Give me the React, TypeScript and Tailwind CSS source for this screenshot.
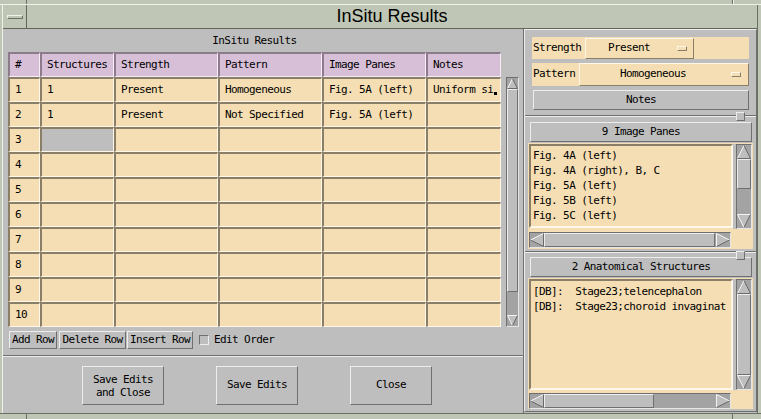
import React from 'react';

const raisedGray = 'bg-[#bebebe] border border-t-[#ededed] border-l-[#ededed] border-r-[#6f6f6f] border-b-[#6f6f6f]';
const raisedBeige = 'bg-[#f5deb3] border border-t-[#fff8e8] border-l-[#fff8e8] border-r-[#8b7e66] border-b-[#8b7e66]';
const sunkenBeige = 'bg-[#f5deb3] border-2 border-t-[#8b7e66] border-l-[#8b7e66] border-r-[#fff8e8] border-b-[#fff8e8]';
const trough = 'bg-[#a3a3a3] border border-t-[#6f6f6f] border-l-[#6f6f6f] border-r-[#e6e6e6] border-b-[#e6e6e6]';

const cellCls = 'h-[25px] flex items-center pl-[5px] overflow-hidden whitespace-nowrap border-l-2 border-t-2 border-r border-b';
const bodyCell = `${cellCls} bg-[#f5deb3] border-l-[#8b7e66] border-t-[#8b7e66] border-r-[#fff8e8] border-b-[#fff8e8]`;
const grayCell = `${cellCls} bg-[#bebebe] border-l-[#8b7e66] border-t-[#8b7e66] border-r-[#fff8e8] border-b-[#fff8e8]`;
const headCell = `${cellCls} bg-[#d8bfd8] border-l-[#8b7b8b] border-t-[#8b7b8b] border-r-[#f6ecf6] border-b-[#f6ecf6]`;

type Dir = 'up' | 'down' | 'left' | 'right';

function Arrow({ dir, w, h }: { dir: Dir; w: number; h: number }) {
  const L = '#f4f4f4';
  const D = '#6a6a6a';
  const cx = w / 2;
  const cy = h / 2;
  const a = 0.5;
  let pts = '';
  let lines: [number, number, number, number, string][] = [];
  if (dir === 'up') {
    pts = `${cx},${a} ${w - a},${h - a} ${a},${h - a}`;
    lines = [[a, h - a, cx, a, L], [cx, a, w - a, h - a, D], [w - a, h - a, a, h - a, D]];
  } else if (dir === 'down') {
    pts = `${a},${a} ${w - a},${a} ${cx},${h - a}`;
    lines = [[a, a, w - a, a, L], [a, a, cx, h - a, L], [w - a, a, cx, h - a, D]];
  } else if (dir === 'left') {
    pts = `${a},${cy} ${w - a},${a} ${w - a},${h - a}`;
    lines = [[a, cy, w - a, a, L], [w - a, a, w - a, h - a, D], [w - a, h - a, a, cy, D]];
  } else {
    pts = `${a},${a} ${w - a},${cy} ${a},${h - a}`;
    lines = [[a, a, a, h - a, L], [a, a, w - a, cy, L], [w - a, cy, a, h - a, D]];
  }
  return (
    <svg width={w} height={h} viewBox={`0 0 ${w} ${h}`} className="block shrink-0">
      <polygon points={pts} fill="#bebebe" />
      {lines.map(([x1, y1, x2, y2, c], i) => (
        <line key={i} x1={x1} y1={y1} x2={x2} y2={y2} stroke={c} strokeWidth={1} />
      ))}
    </svg>
  );
}

function VScroll({ cls, thumb, a }: { cls: string; thumb: string; a: number }) {
  return (
    <div className={`flex flex-col shrink-0 ${trough} ${cls}`}>
      <Arrow dir="up" w={a} h={a} />
      <div className={`shrink-0 ${raisedGray} ${thumb}`} />
      <div className="flex-1" />
      <Arrow dir="down" w={a} h={a} />
    </div>
  );
}

function HScroll({ cls, thumb, a }: { cls: string; thumb: string; a: number }) {
  return (
    <div className={`flex shrink-0 ${trough} ${cls}`}>
      <Arrow dir="left" w={a} h={a} />
      <div className={`shrink-0 ${raisedGray} ${thumb}`} />
      <div className="flex-1" />
      <Arrow dir="right" w={a} h={a} />
    </div>
  );
}

function Dropdown({ cls, text, gap }: { cls: string; text: string; gap: string }) {
  return (
    <div className={`flex items-center ${raisedBeige} ${cls}`}>
      <span className="flex-1 text-center">{text}</span>
      <span className={`w-[10px] h-[5px] ml-[5px] ${gap} ${raisedBeige}`} />
    </div>
  );
}

function Sash({ h, top }: { h: string; top: string }) {
  return (
    <div className={`relative shrink-0 ${h}`}>
      <div className={`absolute left-0 right-0 border-t border-b border-t-[#6f6f6f] border-b-[#ededed] h-[2px] ${top}`} />
      <div className={`absolute left-[211px] top-[2px] w-[9px] h-[9px] ${raisedGray}`} />
    </div>
  );
}

const rows: string[][] = [
  ['1', '1', 'Present', 'Homogeneous', 'Fig. 5A (left)', 'Uniform si'],
  ['2', '1', 'Present', 'Not Specified', 'Fig. 5A (left)', ''],
  ['3', '', '', '', '', ''],
  ['4', '', '', '', '', ''],
  ['5', '', '', '', '', ''],
  ['6', '', '', '', '', ''],
  ['7', '', '', '', '', ''],
  ['8', '', '', '', '', ''],
  ['9', '', '', '', '', ''],
  ['10', '', '', '', '', ''],
];

const headers = ['#', 'Structures', 'Strength', 'Pattern', 'Image Panes', 'Notes'];

const panes = ['Fig. 4A (left)', 'Fig. 4A (right), B, C', 'Fig. 5A (left)', 'Fig. 5B (left)', 'Fig. 5C (left)'];
const structures = ['[DB]:  Stage23;telencephalon', '[DB]:  Stage23;choroid invaginat'];

export default function App() {
  return (
    <div className="w-[761px] h-[419px] overflow-hidden bg-[#bfc6b5] flex flex-col text-black font-['DejaVu_Sans_Mono',monospace] text-[11px] tracking-[-0.6px]">
      {/* resize strip */}
      <div className="h-[5px] flex shrink-0 border-b border-b-[#eef2e8]">
        <div className="w-[27px] border-r border-r-[#6a7163]" />
        <div className="w-[706px] border-r border-r-[#6a7163]" />
        <div className="flex-1 border-l border-l-[#eef2e8]" />
      </div>

      <div className="flex flex-1">
        <div className="w-[3px] border-r border-r-[#eef2e8]" />
        <div className="w-[754px] flex flex-col">
          {/* title bar */}
          <div className="h-[24px] flex shrink-0 border-b border-b-[#5f665a]">
            <div className="w-[24px] flex items-center justify-center border-r border-r-[#5f665a]">
              <div className="w-[16px] h-[4px] border border-t-[#f0f4ea] border-l-[#f0f4ea] border-r-[#6a7163] border-b-[#6a7163]" />
            </div>
            <div className="flex-1 flex items-center justify-center font-['Liberation_Sans',sans-serif] text-[18px] tracking-normal pb-[1px]">
              InSitu Results
            </div>
          </div>

          {/* body */}
          <div className="h-[384px] flex bg-[#bebebe] shrink-0">
            {/* left panel */}
            <div className="w-[521px] flex flex-col border-r border-r-[#6f6f6f]">
              <div className="h-[327px] flex flex-col pl-[5px] border-b border-b-[#6f6f6f]">
                <div className="h-[23px] w-[493px] flex items-center justify-center pt-[2px]">InSitu Results</div>
                <div className="flex">
                  <div className="grid grid-cols-[32px_74px_104px_104px_104px_75px] w-[493px]">
                    {headers.map(h => (
                      <div key={h} className={headCell}>{h}</div>
                    ))}
                    {rows.map((r, ri) =>
                      r.map((v, ci) => (
                        <div key={`${ri}-${ci}`} className={ri === 2 && ci === 1 ? grayCell : bodyCell}>
                          {v}
                          {ri === 0 && ci === 5 && (
                            <span className="inline-block w-[3px] h-[3px] bg-black ml-[1px] mt-[6px]" />
                          )}
                        </div>
                      ))
                    )}
                  </div>
                  <VScroll cls="ml-[5px] mt-[25px] w-[13px] h-[250px]" thumb="h-[203px]" a={11} />
                </div>
                <div className="flex items-center mt-[4px] ml-[1px] h-[18px]">
                  <div className={`w-[48px] h-[18px] flex items-center justify-center ${raisedGray}`}>Add Row</div>
                  <div className={`w-[67px] h-[18px] ml-[2px] flex items-center justify-center ${raisedGray}`}>Delete Row</div>
                  <div className={`w-[66px] h-[18px] ml-[1px] flex items-center justify-center ${raisedGray}`}>Insert Row</div>
                  <div className="w-[10px] h-[10px] ml-[6px] border border-t-[#6f6f6f] border-l-[#6f6f6f] border-r-[#ededed] border-b-[#ededed]" />
                  <span className="ml-[5px]">Edit Order</span>
                </div>
              </div>
              <div className="flex-1 border-t border-t-[#ededed] pt-[9px] pl-[79px] flex gap-[52px]">
                <div className={`w-[82px] h-[39px] flex flex-col items-center justify-center leading-[13px] ${raisedGray}`}>
                  <span>Save Edits</span>
                  <span>and Close</span>
                </div>
                <div className={`w-[82px] h-[39px] flex items-center justify-center ${raisedGray}`}>Save Edits</div>
                <div className={`w-[82px] h-[39px] flex items-center justify-center ${raisedGray}`}>Close</div>
              </div>
            </div>

            {/* right panel */}
            <div className="w-[233px] flex flex-col border border-l-[#ededed] border-t-[#ededed] border-r-[#6f6f6f] border-b-[#6f6f6f] mb-[1px]">
              <div className="mt-[7px] ml-[7px] w-[217px] h-[22px] bg-[#f5deb3] flex items-end shrink-0">
                <span className="w-[53px] pl-[1px] self-center">Strength</span>
                <Dropdown cls="w-[109px] h-[21px]" text="Present" gap="mr-[6px]" />
              </div>
              <div className="mt-[4px] ml-[7px] w-[217px] h-[23px] bg-[#f5deb3] flex shrink-0">
                <span className="w-[47px] pl-[1px] self-center">Pattern</span>
                <Dropdown cls="w-[170px] h-[23px]" text="Homogeneous" gap="mr-[7px]" />
              </div>
              <div className={`mt-[4px] ml-[8px] w-[216px] h-[20px] shrink-0 flex items-center justify-center ${raisedGray}`}>Notes</div>

              <Sash h="h-[12px]" top="top-[5px]" />

              <div className={`ml-[5px] w-[222px] h-[20px] shrink-0 flex items-center justify-center ${raisedGray}`}>9 Image Panes</div>
              <div className="mt-[1px] ml-[3px] w-[225px] h-[106px] shrink-0 bg-[#f5deb3] flex flex-col pt-[1px] pl-[1px]">
                <div className="flex">
                  <div className={`w-[204px] h-[84px] pl-[2px] pt-[2px] leading-[15px] overflow-hidden whitespace-pre ${sunkenBeige}`}>
                    {panes.map(p => (
                      <div key={p}>{p}</div>
                    ))}
                  </div>
                  <div className="bg-[#bebebe] pl-[3px] h-[85px]">
                    <VScroll cls="w-[16px] h-[85px]" thumb="h-[30px]" a={14} />
                  </div>
                </div>
                <HScroll cls="mt-[3px] w-[202px] h-[16px]" thumb="w-[171px]" a={14} />
              </div>

              <Sash h="h-[8px]" top="top-[2px]" />

              <div className={`ml-[5px] w-[222px] h-[20px] shrink-0 flex items-center justify-center ${raisedGray}`}>2 Anatomical Structures</div>
              <div className="mt-[1px] ml-[3px] w-[225px] h-[131px] shrink-0 bg-[#f5deb3] flex flex-col pt-[1px] pl-[1px]">
                <div className="flex">
                  <div className={`w-[204px] h-[111px] pl-[2px] pt-[3px] leading-[15px] overflow-hidden whitespace-pre ${sunkenBeige}`}>
                    {structures.map(s => (
                      <div key={s}>{s}</div>
                    ))}
                  </div>
                  <div className="bg-[#bebebe] pl-[3px] h-[111px]">
                    <VScroll cls="w-[16px] h-[111px]" thumb="h-[81px]" a={14} />
                  </div>
                </div>
                <HScroll cls="mt-[3px] w-[202px] h-[16px]" thumb="w-[110px]" a={14} />
              </div>
            </div>
          </div>
        </div>
        <div className="flex-1 border-l border-l-[#6a7163]" />
      </div>

      {/* bottom strip */}
      <div className="h-[6px] flex shrink-0 border-t border-t-[#6a7163]">
        <div className="w-[27px] border-r border-r-[#6a7163]" />
        <div className="w-[706px] border-r border-r-[#6a7163]" />
        <div className="flex-1" />
      </div>
    </div>
  );
}
